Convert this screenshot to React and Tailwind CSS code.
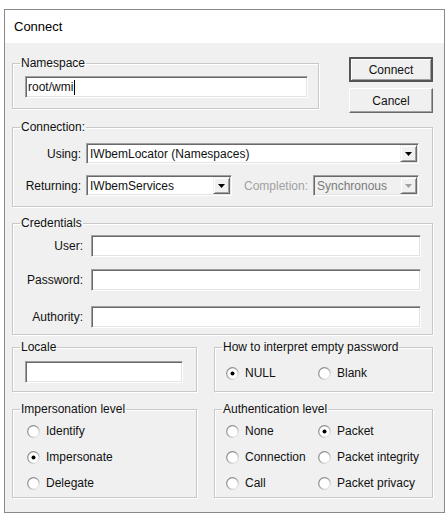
import React from "react";

const font = { fontFamily: '"Liberation Sans", Arial, sans-serif' };

function GroupBox({ title, className = "", children }) {
  return (
    <fieldset
      className={`border border-[#c8c8c8] shadow-[1px_1px_0_#ffffff,inset_1px_1px_0_#ffffff] ${className}`}
    >
      <legend className="ml-[7px] px-[1px] text-[12px] leading-[14px] text-[#111]">
        {title}
      </legend>
      {children}
    </fieldset>
  );
}

function TextBox({ value = "", className = "", caret = false }) {
  return (
    <div
      className={`h-[22px] bg-white border border-t-[#a0a0a0] border-l-[#a0a0a0] border-b-white border-r-white shadow-[inset_1px_1px_0_#696969,inset_-1px_-1px_0_#e3e3e3] flex items-center pl-[2px] text-[12px] text-[#111] ${className}`}
    >
      {value}
      {caret && <span className="w-px h-[15px] bg-black ml-px" />}
    </div>
  );
}

function Arrow({ disabled }) {
  return (
    <svg width="7" height="4" viewBox="0 0 7 4">
      <path d="M0 0h7L3.5 4z" fill={disabled ? "#a0a0a0" : "#000"} />
    </svg>
  );
}

function Combo({ value, className = "", disabled = false }) {
  return (
    <div
      className={`h-[21px] border border-t-[#a0a0a0] border-l-[#a0a0a0] border-b-white border-r-white shadow-[inset_1px_1px_0_#696969,inset_-1px_-1px_0_#e3e3e3] flex items-stretch p-[1px] text-[12px] ${
        disabled ? "bg-[#f0f0f0] text-[#7a7a7a]" : "bg-white text-[#111]"
      } ${className}`}
    >
      <div className="flex-1 flex items-center pl-[2px]">{value}</div>
      <div className="w-[17px] bg-[#f0f0f0] border border-t-[#f0f0f0] border-l-[#f0f0f0] border-b-[#696969] border-r-[#696969] shadow-[inset_1px_1px_0_#ffffff,inset_-1px_-1px_0_#a0a0a0] flex items-center justify-center">
        <Arrow disabled={disabled} />
      </div>
    </div>
  );
}

function Radio({ label, checked = false }) {
  return (
    <div className="flex items-center gap-[6px] h-[16px] text-[12px] text-[#111]">
      <svg width="13" height="13" viewBox="0 0 13 13">
        <defs>
          <linearGradient id="rg" x1="0" y1="0" x2="1" y2="1">
            <stop offset="0" stopColor="#808080" />
            <stop offset="0.5" stopColor="#a0a0a0" />
            <stop offset="1" stopColor="#ffffff" />
          </linearGradient>
        </defs>
        <circle cx="6.5" cy="6.5" r="5.8" fill="#ffffff" stroke="url(#rg)" strokeWidth="1.2" />
        {checked && <circle cx="6.5" cy="6.5" r="2" fill="#000" />}
      </svg>
      <span>{label}</span>
    </div>
  );
}

function Button({ label, primary = false, className = "" }) {
  return (
    <div
      className={`w-[84px] h-[25px] flex items-center justify-center bg-[#f0f0f0] text-[12px] text-[#111] ${
        primary
          ? "border-2 border-[#555] shadow-[inset_1px_1px_0_#ffffff,inset_-1px_-1px_0_#a0a0a0]"
          : "border border-t-white border-l-white border-b-[#696969] border-r-[#696969] shadow-[inset_-1px_-1px_0_#a0a0a0]"
      } ${className}`}
    >
      {label}
    </div>
  );
}

export default function App() {
  return (
    <div className="w-[448px] h-[516px] bg-white pt-[9px] pl-[4px] overflow-hidden" style={font}>
      <div className="w-[441px] border border-[#8a8a8a] bg-[#f0f0f0]">
        {/* Title bar */}
        <div className="h-[33px] bg-white flex items-center pl-[9px] text-[13px] text-black">
          Connect
        </div>

        <div className="pl-[7px] pr-[11px] pb-[14px]">
          {/* Namespace + buttons */}
          <div className="flex justify-between items-start mt-[13px]">
            <GroupBox title="Namespace" className="w-[307px]">
              <div className="pt-[6px] pb-[10px] pl-[12px] pr-[10px]">
                <TextBox value="root/wmi" caret />
              </div>
            </GroupBox>
            <div className="flex flex-col gap-[6px] mt-[1px]">
              <Button label="Connect" primary />
              <Button label="Cancel" />
            </div>
          </div>

          {/* Connection */}
          <GroupBox title="Connection:" className="mt-[7px]">
            <div className="pt-[9px] pb-[10px] pr-[13px] flex flex-col gap-[11px] text-[12px] text-[#111]">
              <div className="flex items-center">
                <span className="w-[68px] text-right">Using:</span>
                <Combo value="IWbemLocator (Namespaces)" className="ml-[5px] flex-1" />
              </div>
              <div className="flex items-center">
                <span className="w-[68px] text-right">Returning:</span>
                <Combo value="IWbemServices" className="ml-[5px] w-[146px]" />
                <span className="ml-[12px] text-[#a0a0a0]">Completion:</span>
                <Combo value="Synchronous" disabled className="ml-auto w-[106px]" />
              </div>
            </div>
          </GroupBox>

          {/* Credentials */}
          <GroupBox title="Credentials" className="mt-[9px]">
            <div className="pt-[5px] pb-[6px] pr-[11px] flex flex-col text-[12px] text-[#111]">
              <div className="flex items-center">
                <span className="w-[70px] text-right">User:</span>
                <TextBox className="ml-[8px] flex-1" />
              </div>
              <div className="flex items-center mt-[12px]">
                <span className="w-[70px] text-right">Password:</span>
                <TextBox className="ml-[8px] flex-1" />
              </div>
              <div className="flex items-center mt-[15px]">
                <span className="w-[70px] text-right">Authority:</span>
                <TextBox className="ml-[8px] flex-1" />
              </div>
            </div>
          </GroupBox>

          {/* Locale + empty password */}
          <div className="grid grid-cols-[185px_1fr] gap-x-[17px] mt-[5px]">
            <GroupBox title="Locale">
              <div className="pt-[7px] pb-[8px] pl-[12px] pr-[13px]">
                <TextBox />
              </div>
            </GroupBox>
            <GroupBox title="How to interpret empty password">
              <div className="grid grid-cols-[92px_1fr] pl-[11px] pt-[11px] pb-[9px]">
                <Radio label="NULL" checked />
                <Radio label="Blank" />
              </div>
            </GroupBox>

            <GroupBox title="Impersonation level" className="mt-[10px]">
              <div className="flex flex-col gap-[10px] pl-[14px] pt-[7px] pb-[6px]">
                <Radio label="Identify" />
                <Radio label="Impersonate" checked />
                <Radio label="Delegate" />
              </div>
            </GroupBox>
            <GroupBox title="Authentication level" className="mt-[10px]">
              <div className="grid grid-cols-[92px_1fr] gap-y-[10px] pl-[11px] pt-[7px] pb-[6px]">
                <Radio label="None" />
                <Radio label="Packet" checked />
                <Radio label="Connection" />
                <Radio label="Packet integrity" />
                <Radio label="Call" />
                <Radio label="Packet privacy" />
              </div>
            </GroupBox>
          </div>
        </div>
      </div>
    </div>
  );
}
